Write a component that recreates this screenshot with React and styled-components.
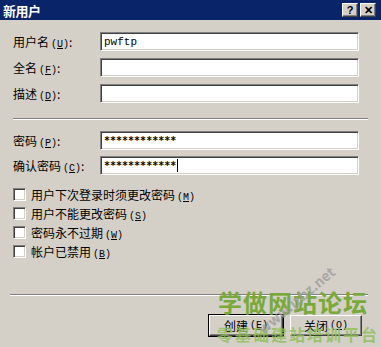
import React from 'react';
import styled, { createGlobalStyle } from 'styled-components';

const Global = createGlobalStyle`
  html, body {
    margin: 0;
    padding: 0;
    background: #d4d0c8;
  }
`;

const Window = styled.div`
  position: relative;
  width: 381px;
  height: 347px;
  background: #d4d0c8;
  font-family: "Noto Sans CJK SC", "Liberation Sans", sans-serif;
  font-size: 12px;
  color: #000;
  overflow: hidden;
  display: flex;
  flex-direction: column;
`;

const TitleBar = styled.div`
  height: 20px;
  background: #0a246a;
  display: flex;
  align-items: center;
  justify-content: space-between;
  padding: 0 5px 0 3px;
`;

const Title = styled.div`
  color: #fff;
  font-weight: bold;
  font-size: 13px;
  letter-spacing: -0.5px;
`;

const CaptionButtons = styled.div`
  display: flex;
  gap: 2px;
`;

const CaptionButton = styled.div`
  width: 14px;
  height: 12px;
  background: #d4d0c8;
  border-top: 1px solid #fff;
  border-left: 1px solid #fff;
  border-right: 1px solid #404040;
  border-bottom: 1px solid #404040;
  box-shadow: inset -1px -1px 0 #808080;
  display: flex;
  align-items: center;
  justify-content: center;
  font-family: "Liberation Sans", sans-serif;
  font-weight: bold;
  font-size: 11px;
  line-height: 1;
`;

const Body = styled.div`
  flex: 1;
  display: flex;
  flex-direction: column;
  padding: 12px 13px 0 13px;
`;

const FieldGroup = styled.div`
  display: flex;
  flex-direction: column;
  gap: ${(p) => p.$gap}px;
`;

const FieldRow = styled.div`
  display: flex;
  align-items: center;
  height: 19px;
`;

const Label = styled.div`
  width: 87px;
  white-space: nowrap;
  font-size: 12px;
`;

const Key = styled.span`
  font-family: "Liberation Mono", monospace;
  font-size: 10px;
  margin-left: 2px;
  u { text-decoration: underline; }
`;

const Input = styled.div`
  width: 254px;
  height: 15px;
  background: #fff;
  border-top: 1px solid #808080;
  border-left: 1px solid #808080;
  border-right: 1px solid #fff;
  border-bottom: 1px solid #fff;
  box-shadow: inset 1px 1px 0 #404040, inset -1px -1px 0 #d4d0c8;
  padding: 1px 0 1px 3px;
  display: flex;
  align-items: center;
  font-family: ${(p) => (p.$mask ? '"DejaVu Sans Mono", monospace' : '"Liberation Mono", monospace')};
  font-size: ${(p) => (p.$mask ? '10px' : '11px')};
  font-weight: ${(p) => (p.$mask ? 'bold' : 'normal')};
`;

const Caret = styled.span`
  display: inline-block;
  width: 1px;
  height: 13px;
  background: #000;
  margin-left: 1px;
`;

const Separator = styled.div`
  height: 0;
  border-top: 1px solid #808080;
  border-bottom: 1px solid #fff;
  margin: ${(p) => p.$margin};
`;

const CheckList = styled.div`
  display: flex;
  flex-direction: column;
  gap: 6px;
  margin-top: 13px;
`;

const CheckRow = styled.div`
  display: flex;
  align-items: center;
  height: 13px;
  gap: 5px;
`;

const CheckBox = styled.div`
  width: 9px;
  height: 9px;
  background: #fff;
  border-top: 1px solid #808080;
  border-left: 1px solid #808080;
  border-right: 1px solid #fff;
  border-bottom: 1px solid #fff;
  box-shadow: inset 1px 1px 0 #404040, inset -1px -1px 0 #d4d0c8;
  padding: 1px;
`;

const ButtonBar = styled.div`
  display: flex;
  justify-content: flex-end;
  gap: 7px;
  padding-right: 6px;
`;

const Button = styled.div`
  width: ${(p) => (p.$default ? 72 : 70)}px;
  height: 19px;
  background: #d4d0c8;
  border-top: 1px solid #fff;
  border-left: 1px solid #fff;
  border-right: 1px solid #404040;
  border-bottom: 1px solid #404040;
  box-shadow: inset -1px -1px 0 #808080;
  outline: ${(p) => (p.$default ? '1px solid #000' : 'none')};
  display: flex;
  align-items: center;
  justify-content: center;
  font-size: 12px;
`;

const Watermark = styled.div`
  position: absolute;
  left: ${(p) => p.$x}px;
  top: ${(p) => p.$y}px;
  color: ${(p) => p.$color};
  font-size: ${(p) => p.$size}px;
  font-weight: bold;
  white-space: nowrap;
  letter-spacing: ${(p) => p.$spacing || 0}px;
  transform: rotate(${(p) => p.$rotate || 0}deg);
  transform-origin: left bottom;
  opacity: ${(p) => p.$opacity || 1};
  pointer-events: none;
`;

const fields = [
  { label: '用户名', key: 'U', value: 'pwftp' },
  { label: '全名', key: 'F', value: '' },
  { label: '描述', key: 'D', value: '' },
];

const passwords = [
  { label: '密码', key: 'P', caret: false },
  { label: '确认密码', key: 'C', caret: true },
];

const options = [
  { label: '用户下次登录时须更改密码', key: 'M' },
  { label: '用户不能更改密码', key: 'S' },
  { label: '密码永不过期', key: 'W' },
  { label: '帐户已禁用', key: 'B' },
];

function KeyHint({ k }) {
  return (
    <Key>
      (<u>{k}</u>)
    </Key>
  );
}

export default function App() {
  return (
    <Window>
      <Global />
      <TitleBar>
        <Title>新用户</Title>
        <CaptionButtons>
          <CaptionButton>?</CaptionButton>
          <CaptionButton>✕</CaptionButton>
        </CaptionButtons>
      </TitleBar>
      <Body>
        <FieldGroup $gap={7}>
          {fields.map((f) => (
            <FieldRow key={f.key}>
              <Label>
                {f.label}
                <KeyHint k={f.key} />:
              </Label>
              <Input>{f.value}</Input>
            </FieldRow>
          ))}
        </FieldGroup>
        <Separator $margin="15px 0 11px 0" />
        <FieldGroup $gap={6}>
          {passwords.map((f) => (
            <FieldRow key={f.key}>
              <Label>
                {f.label}
                <KeyHint k={f.key} />:
              </Label>
              <Input $mask>
                ************
                {f.caret && <Caret />}
              </Input>
            </FieldRow>
          ))}
        </FieldGroup>
        <CheckList>
          {options.map((o) => (
            <CheckRow key={o.key}>
              <CheckBox />
              <span>
                {o.label}
                <KeyHint k={o.key} />
              </span>
            </CheckRow>
          ))}
        </CheckList>
        <Separator $margin="36px 0 19px -3px" />
        <ButtonBar>
          <Button $default>
            创建<KeyHint k="E" />
          </Button>
          <Button>
            关闭<KeyHint k="O" />
          </Button>
        </ButtonBar>
      </Body>
      <Watermark $x={218} $y={284} $size={24} $color="#79a93b" $spacing={1}>
        学做网站论坛
      </Watermark>
      <Watermark $x={217} $y={322} $size={16} $color="#8fbf55" $spacing={2} $opacity={0.8}>
        零基础建站培训平台
      </Watermark>
      <Watermark $x={266} $y={318} $size={14} $color="#9a9a9a" $rotate={-40} $opacity={0.75}>
        www.jzbz.net
      </Watermark>
    </Window>
  );
}
